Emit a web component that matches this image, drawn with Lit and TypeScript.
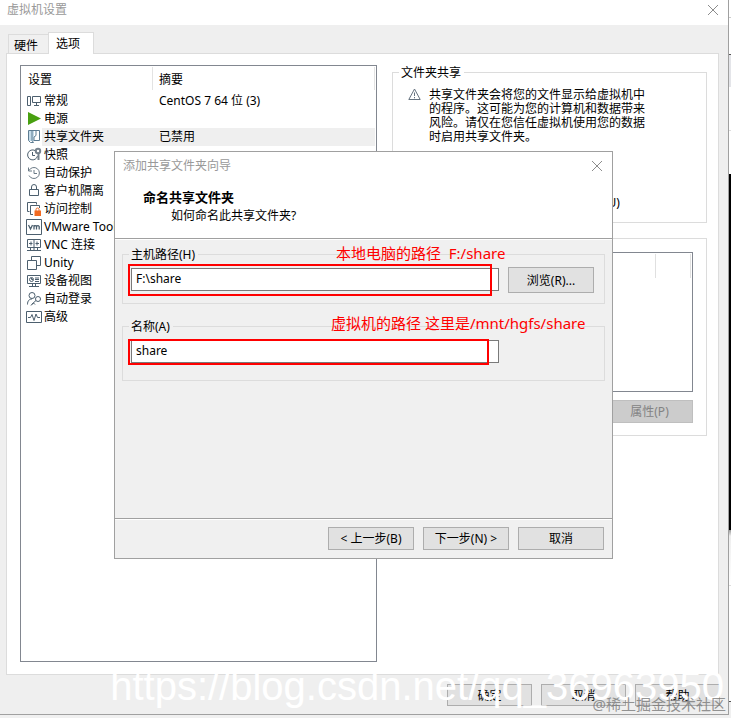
import { LitElement, html, css, svg, type SVGTemplateResult } from "lit";
import { customElement, property, state } from "lit/decorators.js";
import { classMap } from "lit/directives/class-map.js";

const controls = css`
  * {
    box-sizing: border-box;
  }
  button,
  input {
    font: inherit;
    color: inherit;
    margin: 0;
  }
  .btn {
    height: 23px;
    padding: 1px 0 0;
    border: 1px solid #adadad;
    border-radius: 0;
    background: #e1e1e1;
    line-height: 20px;
    white-space: nowrap;
  }
  fieldset {
    margin: 0;
    min-width: 0;
    border: 1px solid #dcdcdc;
  }
  legend {
    height: 16px;
    line-height: 18px;
    padding: 0 3px 0 2px;
  }
  .close {
    width: 12px;
    height: 12px;
    padding: 0;
    border: 0;
    background: none;
    display: block;
  }
  .close svg {
    display: block;
    width: 12px;
    height: 12px;
    stroke: #8c8c8c;
  }
`;

const closeIcon = html`<svg viewBox="0 0 12 12" fill="none" aria-hidden="true"><path d="M1 1L11 11M11 1L1 11" /></svg>`;

const icons: Record<string, SVGTemplateResult> = {
  general: svg`<path d="M1.5 3.5h3v9h-3zM6.500 3.500h8v6h-8zM10.500 9.500v3M8 12.500h5" />`,
  power: svg`<path class="green" d="M2 1L15 7.500L2 14z" />`,
  shared: svg`<path class="pale" d="M3 2h5v10H3z" /><path d="M2.500 1.500h3.500v10L7.500 13.500h-3l-2-2zM6 1.500h7.500v10H8M10 2v4.500l-2 1.500v4" stroke="#5d7c92" />`,
  snapshot: svg`<path d="M9 3.500A5 5 0 1 0 11.500 9M6.500 5v3.500H9" /><circle cx="12" cy="4" r="2.200" stroke-width="2" stroke="#76828d" /><path stroke="#76828d" stroke-width="2" d="M12.500 6v7" />`,
  protect: svg`<path d="M3 5.500A5.500 5.500 0 1 1 3 10.500M2.500 2.500v3.500H6M8 5v3.500h3" stroke="#6b7a86" />`,
  isolate: svg`<path d="M3.500 6.500h9v6h-9zM5.500 6.500V4a2.500 2.500 0 0 1 5 0v2.500" />`,
  access: svg`<path d="M3.500 10.500h-2v-9h9v2M7 13.500H4.500v-9h9V7" /><path d="M10 10V8.500a1.500 1.500 0 0 1 3 0V10" stroke="#f26a21" /><path class="orange" d="M8.500 9.500h6.500V15H8.500z" />`,
  tools: svg`<path d="M.5.5h15v15H.5z" /><path stroke-width="1.300" d="M2.500 6L4.500 10L6.500 6M8 10.500V6M8 7.500q1.400-1.800 2.500 0V10.500M10.500 7.500q1.500-1.800 2.700 0V10.500" />`,
  vnc: svg`<path d="M1.500 2.500h13v8h-13zM8 2.500v11M3 6.500h3.500M5 4.500v4M13 6.500H9.500M11 4.500v4M4.500 10.500v2.500M11.500 10.500v2.500M1 13.500h14" />`,
  unity: svg`<path d="M1.500 5.500h9v9h-9zM5.500 5V1.500h9v9H11" />`,
  view: svg`<path d="M1.500 2.500h13v8h-13zM3 13.500h10M6.500 10.500v3M9.500 10.500v3M9 5h4M9 6.500h4M9 8.500h4" /><circle cx="5.500" cy="6.500" r="2" /><path d="M5.500 5v1.500H7" />`,
  login: svg`<circle cx="6" cy="4.500" r="3" /><path d="M1.500 13.500c0-4 2-5.500 4.500-5.500M7.500 12L5 14.500" /><circle cx="12" cy="8" r="2.500" /><path d="M10 9.500L5.500 13.500M7.500 12l1.500 1.500" />`,
  advanced: svg`<path d="M.5 2.500h15v11H.5zM2 8.500h2.500L6 5.500l2 6L10 5l1.500 3.500H14" />`,
};

interface Option {
  icon: string;
  label: string;
  summary?: string;
}

const options: Option[] = [
  { icon: "general", label: "常规", summary: "CentOS 7 64 位 (3)" },
  { icon: "power", label: "电源" },
  { icon: "shared", label: "共享文件夹", summary: "已禁用" },
  { icon: "snapshot", label: "快照" },
  { icon: "protect", label: "自动保护" },
  { icon: "isolate", label: "客户机隔离" },
  { icon: "access", label: "访问控制" },
  { icon: "tools", label: "VMware Tools" },
  { icon: "vnc", label: "VNC 连接" },
  { icon: "unity", label: "Unity" },
  { icon: "view", label: "设备视图" },
  { icon: "login", label: "自动登录" },
  { icon: "advanced", label: "高级" },
];

@customElement("option-list")
class OptionList extends LitElement {
  @property({ type: Number }) selected = 2;

  static styles = [
    controls,
    css`
      :host {
        display: block;
        box-sizing: border-box;
        border: 1px solid #828790;
        background: #fff;
        padding-right: 1px;
      }
      table {
        width: 100%;
        table-layout: fixed;
        border-collapse: collapse;
      }
      .name-col {
        width: 132px;
      }
      th {
        height: 26px;
        padding: 2px 0 0 7px;
        font-weight: normal;
        text-align: left;
        background: linear-gradient(#e3e3e3, #e3e3e3) right 1px / 1px 23px no-repeat;
      }
      td {
        height: 18px;
        padding: 0;
        line-height: 18px;
        white-space: nowrap;
      }
      th + th,
      td + td {
        padding-left: 6px;
      }
      .name {
        display: flex;
        align-items: center;
        padding-left: 5px;
      }
      .name svg {
        flex: none;
        width: 16px;
        height: 16px;
        fill: none;
        stroke: #4c5f6e;
      }
      .name .green {
        fill: #48a010;
        stroke: none;
      }
      .name .orange {
        fill: #f26a21;
        stroke: none;
      }
      .name .pale {
        fill: #c5dcea;
        stroke: none;
      }
      .label {
        flex: 1;
        height: 18px;
        padding-left: 2px;
      }
      .on .label,
      .on td + td {
        background: #efefef;
      }
    `,
  ];

  render() {
    return html`<table>
      <thead>
        <tr>
          <th class="name-col">设置</th>
          <th>摘要</th>
        </tr>
      </thead>
      <tbody>
        ${options.map(
          (o, i) => html`<tr class=${classMap({ on: i === this.selected })} @click=${() => (this.selected = i)}>
            <td>
              <div class="name">
                <svg viewBox="0 0 16 16" aria-hidden="true">${icons[o.icon]}</svg>
                <span class="label">${o.label}</span>
              </div>
            </td>
            <td>${o.summary ?? ""}</td>
          </tr>`
        )}
      </tbody>
    </table>`;
  }
}

@customElement("share-wizard")
class ShareWizard extends LitElement {
  @state() private path = "F:\\share";
  @state() private name = "share";

  static styles = [
    controls,
    css`
      :host {
        display: flex;
        flex-direction: column;
        box-sizing: border-box;
        border: 1px solid #a0a0a0;
        background: #f0f0f0;
      }
      .head {
        height: 87px;
        flex: none;
        background: #fff;
        border-bottom: 1px solid #a0a0a0;
      }
      .title {
        display: flex;
        align-items: center;
        justify-content: space-between;
        height: 28px;
        padding: 0 9px 0 8px;
        color: #999;
      }
      h2 {
        margin: 8px 0 0 28px;
        font-size: 13px;
        line-height: 18px;
      }
      p {
        margin: 0 0 0 56px;
        line-height: 20px;
      }
      .body {
        flex: 1;
        padding: 6px 7px;
        display: flex;
        flex-direction: column;
        gap: 14px;
        border-top: 1px solid #fff;
      }
      fieldset {
        position: relative;
        height: 58px;
        padding: 6px 10px 0 8px;
      }
      fieldset + fieldset {
        height: 63px;
      }
      fieldset legend {
        margin-left: -2px;
      }
      .row {
        display: flex;
        gap: 9px;
      }
      .field {
        flex: 1;
        min-width: 0;
        height: 23px;
        padding: 0 4px 2px;
        border: 1px solid #7a7a7a;
        border-radius: 0;
        background: #fff;
      }
      .browse {
        width: 86px;
        height: 26px;
        margin-top: -1px;
      }
      .spacer {
        width: 86px;
      }
      .mark {
        position: absolute;
        left: 5px;
        top: 2px;
        right: 112px;
        height: 32px;
        border: 2px solid #f00;
        pointer-events: none;
      }
      .mark.low {
        right: 115px;
        top: 5px;
        height: 26px;
      }
      .note {
        position: absolute;
        left: 213px;
        top: -20px;
        color: #f00;
        font-size: 15px;
        line-height: 22px;
        white-space: pre;
      }
      .note.low {
        left: 208px;
        top: -22px;
      }
      .foot {
        display: flex;
        justify-content: flex-end;
        gap: 9px;
        height: 40px;
        padding: 8px 8px 0;
        border-top: 1px solid #a0a0a0;
        box-shadow: inset 0 1px #fff;
      }
      .foot .btn {
        width: 86px;
      }
    `,
  ];

  render() {
    return html`
      <div class="head">
        <div class="title"><span>添加共享文件夹向导</span><button class="close" aria-label="关闭">${closeIcon}</button></div>
        <h2>命名共享文件夹</h2>
        <p>如何命名此共享文件夹?</p>
      </div>
      <div class="body">
        <fieldset>
          <legend><label for="path">主机路径(H)</label></legend>
          <div class="row">
            <input id="path" class="field" .value=${this.path} @input=${(e: Event) => (this.path = (e.target as HTMLInputElement).value)} />
            <button class="btn browse">浏览(R)...</button>
          </div>
          <div class="mark"></div>
          <span class="note">本地电脑的路径  F:/share</span>
        </fieldset>
        <fieldset>
          <legend><label for="name">名称(A)</label></legend>
          <div class="row">
            <input id="name" class="field" .value=${this.name} @input=${(e: Event) => (this.name = (e.target as HTMLInputElement).value)} />
            <span class="spacer"></span>
          </div>
          <div class="mark low"></div>
          <span class="note low">虚拟机的路径 这里是/mnt/hgfs/share</span>
        </fieldset>
      </div>
      <div class="foot">
        <button class="btn">&lt; 上一步(B)</button>
        <button class="btn">下一步(N) &gt;</button>
        <button class="btn">取消</button>
      </div>
    `;
  }
}

@customElement("app-root")
class AppRoot extends LitElement {
  static styles = [
    controls,
    css`
      :host {
        display: flex;
        position: relative;
        min-height: 100vh;
        box-sizing: border-box;
        padding-bottom: 3px;
        overflow: hidden;
        background: #f0f0f0;
        color: #000;
        font: 12px/16px "Noto Sans", "Noto Sans CJK SC", sans-serif;
      }
      .window {
        flex: 1;
        min-width: 0;
        display: flex;
        flex-direction: column;
        background: #efefef;
        border-right: 1px solid #a0a0a0;
        border-bottom: 1px solid #a0a0a0;
      }
      .behind {
        width: 2px;
        background: linear-gradient(
          #fff 17px, #ccc 17px 18px, #fff 18px 54px, #555 54px 55px, #e4e5e9 55px 87px, #fff 87px 130px,
          #ddd 130px 131px, #fff 131px 174px, #000 174px 530px, #999 530px, #eee 536px, #fff 585px,
          #ddd 585px 586px, #fff 586px 701px, #555 701px 702px, #f0f0f0 702px
        );
      }
      .title {
        display: flex;
        align-items: center;
        justify-content: space-between;
        height: 25px;
        padding: 0 9px 6px 7px;
        background: #fff;
        color: #999;
      }
      .tabs {
        display: flex;
        align-items: flex-end;
        height: 28px;
        padding-left: 8px;
      }
      .tab {
        width: 40px;
        height: 19px;
        padding: 3px 0 0 5px;
        border: 1px solid #dcdcdc;
        border-width: 1px 0 0 1px;
        background: #f0f0f0;
        line-height: 16px;
        text-align: left;
      }
      .tab.on {
        width: 46px;
        height: 22px;
        margin-bottom: -1px;
        padding: 0 0 0 7px;
        border-right-width: 1px;
        background: #fff;
        z-index: 1;
      }
      .panel {
        flex: 1;
        display: grid;
        grid-template-columns: 357fr 315fr;
        gap: 15px;
        margin: 0 9px 0 6px;
        padding: 11px 11px 12px 13px;
        border: 1px solid #dcdcdc;
        background: #fff;
      }
      .side {
        margin-top: -1px;
        display: flex;
        flex-direction: column;
        gap: 15px;
      }
      .sharing {
        height: 159px;
        padding: 8px 12px 0 15px;
      }
      .sharing legend {
        margin-left: -9px;
      }
      .warn {
        display: grid;
        grid-template-columns: 12px 216px;
        gap: 9px;
        line-height: 14px;
      }
      .warn svg {
        width: 13px;
        height: 13px;
        fill: none;
        stroke: #66727f;
      }
      .modes {
        display: grid;
        gap: 9px;
        padding: 6px 0 0 21px;
      }
      .modes label {
        display: flex;
        align-items: center;
        gap: 6px;
        height: 14px;
        white-space: nowrap;
      }
      .modes input {
        width: 13px;
        height: 13px;
      }
      .folders {
        height: 198px;
        padding: 13px 13px 0 9px;
        border: 1px solid #dcdcdc;
        display: flex;
        flex-direction: column;
        align-items: flex-end;
        gap: 8px;
      }
      .grid {
        display: flex;
        justify-content: flex-end;
        gap: 34px;
        width: 100%;
        height: 140px;
        padding: 1px;
        border: 1px solid #828790;
      }
      .grid i {
        width: 1px;
        height: 24px;
        background: #e0e0e0;
      }
      .btn.off {
        width: 87px;
        border-color: #bfbfbf;
        background: #ccc;
        color: #838383;
      }
      .foot {
        display: flex;
        justify-content: flex-end;
        gap: 9px;
        padding: 9px 8px 8px;
      }
      .foot .btn {
        width: 85px;
        height: 22px;
      }
      .dialog {
        position: absolute;
        left: 114px;
        top: 151px;
        width: 499px;
        height: 408px;
      }
      .url {
        position: absolute;
        right: 7px;
        bottom: 12px;
        color: #fff;
        font: 40px/40px "Liberation Sans", sans-serif;
        pointer-events: none;
      }
      .credit {
        position: absolute;
        right: 5px;
        bottom: 4px;
        color: rgba(120, 120, 120, 0.8);
        font-size: 15px;
        line-height: 20px;
        pointer-events: none;
      }
    `,
  ];

  render() {
    return html`
      <main class="window">
        <div class="title"><span>虚拟机设置</span><button class="close" aria-label="关闭">${closeIcon}</button></div>
        <div class="tabs" role="tablist">
          <button class="tab" role="tab" aria-selected="false">硬件</button>
          <button class="tab on" role="tab" aria-selected="true">选项</button>
        </div>
        <div class="panel">
          <option-list></option-list>
          <div class="side">
            <fieldset class="sharing">
              <legend>文件夹共享</legend>
              <div class="warn">
                <svg viewBox="0 0 13 13" aria-hidden="true"><path d="M6.500 1L12.200 11.500H.8zM6.500 4.500v3.500M6.500 9v1.300" /></svg>
                <span>共享文件夹会将您的文件显示给虚拟机中的程序。这可能为您的计算机和数据带来风险。请仅在您信任虚拟机使用您的数据时启用共享文件夹。</span>
              </div>
              <div class="modes">
                <label><input type="radio" name="mode" aria-label="已禁用" checked /></label>
                <label><input type="radio" name="mode" aria-label="总是启用" /></label>
                <label><input type="radio" name="mode" />在下次关机或挂起前一直启用(U)</label>
              </div>
            </fieldset>
            <section class="folders">
              <div class="grid"><i></i><i></i></div>
              <button class="btn off" disabled>属性(P)</button>
            </section>
          </div>
        </div>
        <div class="foot">
          <button class="btn">确定</button>
          <button class="btn">取消</button>
          <button class="btn">帮助</button>
        </div>
      </main>
      <div class="behind"></div>
      <share-wizard class="dialog" role="dialog" aria-label="添加共享文件夹向导"></share-wizard>
      <div class="url">https://blog.csdn.net/qq_36963950</div>
      <div class="credit">@稀土掘金技术社区</div>
    `;
  }
}
